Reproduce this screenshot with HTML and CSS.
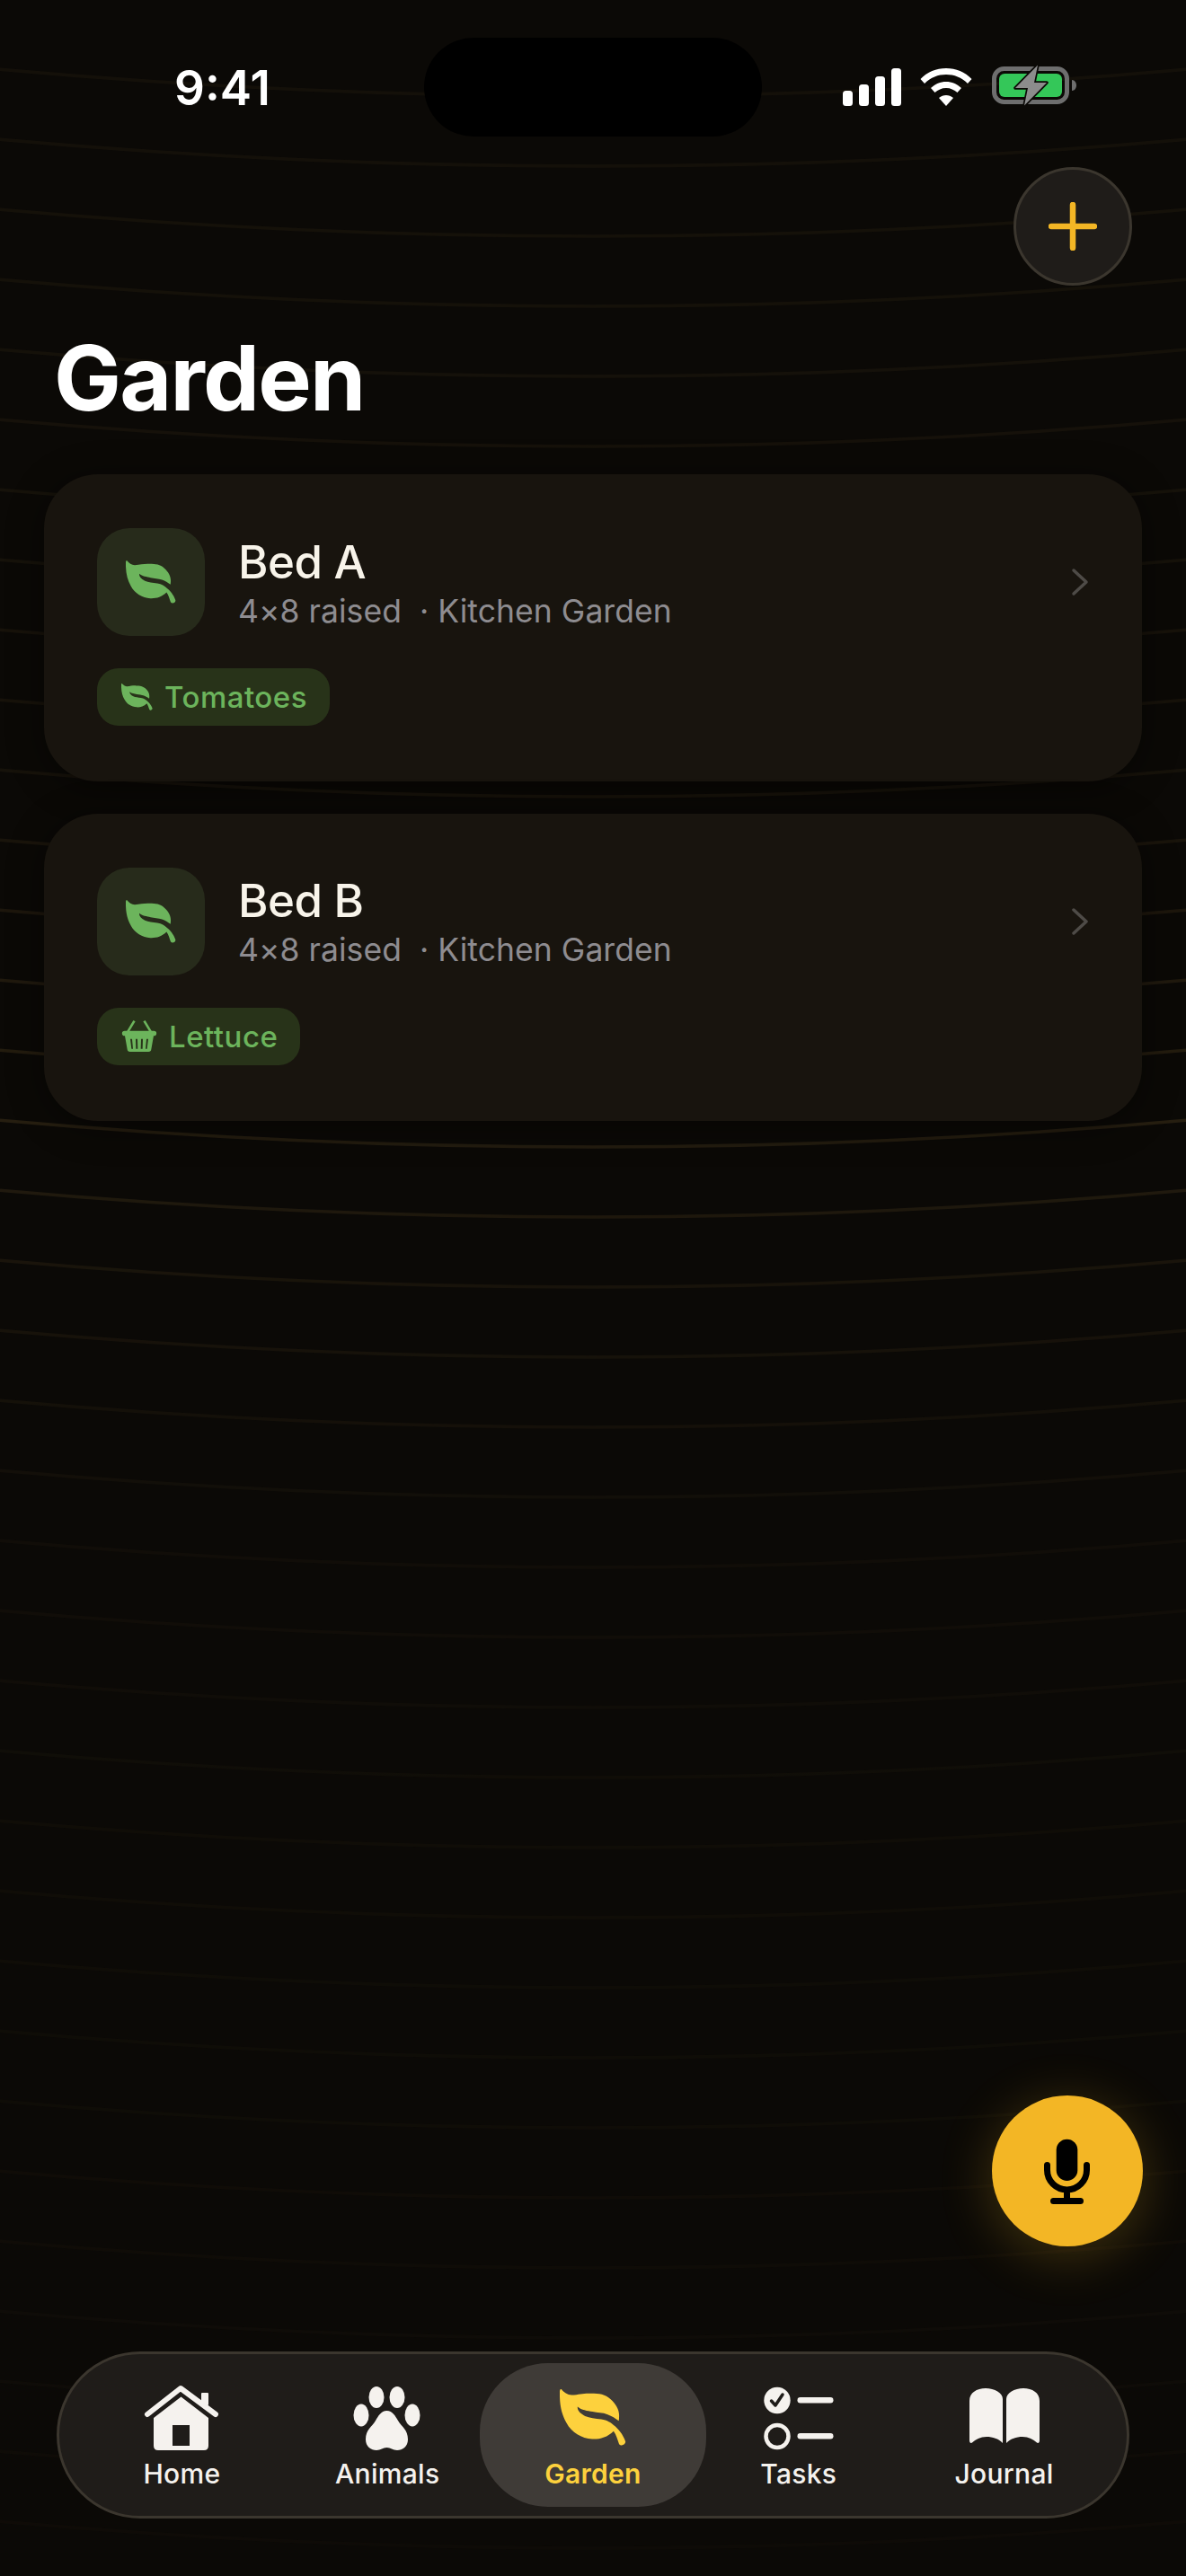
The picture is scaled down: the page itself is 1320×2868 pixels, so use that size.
FILE: index.html
```html
<!DOCTYPE html>
<html lang="en">
<head>
<meta charset="utf-8">
<title>Garden</title>
<link rel="stylesheet" href="styles.css">
</head>
<body>
<svg class="sprites" width="0" height="0" aria-hidden="true">
  <symbol id="leaf" viewBox="0 0 168 143">
    <path d="M4 0C10 8 20 14 30 15C50 14 60 10 79 11C100 11 115 13 128 25C142 37 150 52 150 65C150 72 150 76 149 80C140 73 132 68 121 64C108 59 95 60 83 57C70 54 55 53 45 44C44 52 50 60 64 68C75 73 90 74 105 76C120 78 130 85 136 91C148 100 160 115 166 132C167 141 155 145 150 139C146 128 143 115 136 106C120 122 100 127 82 126C55 124 30 110 17 85C5 65 -1 40 0 6C0 2 2 -1 4 0Z"/>
  </symbol>
  <symbol id="basket" viewBox="-3 0 120 105">
    <path d="M37 0l7 4L24 37h-9zM77 0l-7 4 20 33h9z"/>
    <path fill-rule="evenodd" d="M8 35H106A8.500 8.500 0 0 1 106 52H105L97 97Q96 105 88 105H26Q18 105 17 97L9 52H8A8.500 8.500 0 0 1 8 35ZM27 62L31 95H36L33 62ZM45 62L46 95H52L51 62ZM63 62L62 95H68L69 62ZM81 62L78 95H83L87 62Z"/>
  </symbol>
</svg>
<div class="phone">
  <svg class="backdrop" width="1320" height="2868" aria-hidden="true">
    <defs>
      <pattern id="arc" width="1320" height="78" patternUnits="userSpaceOnUse" y="75">
        <path d="M-2 2Q660 62 1322 2" class="arc-line"/>
      </pattern>
      <linearGradient id="fade" x1="0" x2="0" y1="0" y2="1">
        <stop offset="0" stop-color="#fff" stop-opacity=".36"/>
        <stop offset=".3" stop-color="#fff" stop-opacity=".46"/>
        <stop offset=".435" stop-color="#fff" stop-opacity="1"/>
        <stop offset=".5" stop-color="#fff" stop-opacity=".5"/>
        <stop offset=".6" stop-color="#fff" stop-opacity=".24"/>
        <stop offset="1" stop-color="#fff" stop-opacity=".14"/>
      </linearGradient>
      <mask id="fademask"><rect width="1320" height="2868" fill="url(#fade)"/></mask>
    </defs>
    <rect y="75" width="1320" height="2793" fill="url(#arc)" mask="url(#fademask)"/>
  </svg>

  <header class="status">
    <span class="clock">9:41</span>
    <div class="island"></div>
    <div class="status-icons">
      <svg class="signal" viewBox="0 0 66 42"><rect x="1" y="25" width="11" height="17" rx="3.500"/><rect x="19" y="18" width="11" height="24" rx="3.500"/><rect x="37" y="9" width="11" height="33" rx="3.500"/><rect x="55" y="0" width="11" height="42" rx="3.500"/></svg>
      <svg class="wifi" viewBox="0 0 58 42"><path d="M29 0C40 0 50 4 57.500 12L53 17C46 10 38 7 29 7C20 7 12 10 5 17L.5 12C8 4 18 0 29 0Z"/><path d="M29 15C35.500 15 41 17.500 46 22L41.500 27C38 24 34 22 29 22C24 22 20 24 16.500 27L12 22C17 17.500 22.500 15 29 15Z"/><path d="M29 30C32 30 34.500 31 37 33L29 42L21 33C23.500 31 26 30 29 30Z"/></svg>
      <svg class="battery" viewBox="0 0 94 46">
        <rect x="2.500" y="4.500" width="81" height="37" rx="11" class="batt-shell"/>
        <rect x="8" y="10" width="70" height="26" rx="6" class="batt-fill"/>
        <path d="M89 17C92 17 94 20 94 23C94 26 92 29 89 29Z" class="batt-tip"/>
        <path d="M51 0.500L26 26H40L36 45.500L61 20H47Z" class="batt-bolt"/>
      </svg>
    </div>
  </header>

  <div class="actions">
    <button class="add" type="button" aria-label="Add">
      <svg viewBox="0 0 54 54"><path d="M27 3V51M3 27H51"/></svg>
    </button>
  </div>

  <h1 class="title">Garden</h1>

  <main class="beds">
    <article class="bed">
      <div class="bed-head">
        <div class="bed-icon"><svg class="leaf-lg"><use href="#leaf"/></svg></div>
        <div class="bed-text">
          <h2 class="bed-name">Bed A</h2>
          <p class="bed-sub"><span>4×8 raised</span><span>· Kitchen Garden</span></p>
        </div>
        <svg class="chev" viewBox="0 0 20 32"><path d="M3 3L17 16L3 29"/></svg>
      </div>
      <div class="chip"><svg class="leaf-sm"><use href="#leaf"/></svg><span>Tomatoes</span></div>
    </article>
    <article class="bed">
      <div class="bed-head">
        <div class="bed-icon"><svg class="leaf-lg"><use href="#leaf"/></svg></div>
        <div class="bed-text">
          <h2 class="bed-name">Bed B</h2>
          <p class="bed-sub"><span>4×8 raised</span><span>· Kitchen Garden</span></p>
        </div>
        <svg class="chev" viewBox="0 0 20 32"><path d="M3 3L17 16L3 29"/></svg>
      </div>
      <div class="chip"><svg class="basket-sm"><use href="#basket"/></svg><span>Lettuce</span></div>
    </article>
  </main>

  <div class="fab-row">
    <button class="fab" type="button" aria-label="Record">
      <svg viewBox="0 0 56 76">
        <rect x="15.700" y="2.700" width="23.600" height="46.300" rx="11.800" class="mic-body"/>
        <path d="M5.500 31.500V37A22 22 0 0 0 49.500 37V31.500M27.500 59V71.500M12.500 71.500H42.500" class="mic-stand"/>
      </svg>
    </button>
  </div>

  <nav class="tabs">
    <a class="tab">
      <svg class="ico ico-home" viewBox="0 0 86 76">
        <path d="M5 33L42 4L81 33" class="ico-stroke"/>
        <rect x="65" y="9" width="8" height="14" rx="1"/>
        <path fill-rule="evenodd" d="M42.500 13.500L73 37V68Q73 73 68 73H17Q12 73 12 68V37ZM33 45V68H52V45Z"/>
      </svg>
      <span>Home</span>
    </a>
    <a class="tab">
      <svg class="ico ico-paw" viewBox="0 0 82 76">
        <ellipse cx="29" cy="14" rx="8.500" ry="12"/><ellipse cx="52" cy="14" rx="8.500" ry="12"/>
        <ellipse cx="12" cy="34" rx="8.500" ry="12.500"/><ellipse cx="69" cy="34" rx="8.500" ry="12.500"/>
        <path d="M40.500 29C47 29 50 35 53 40C57 47 64 50 64 61C64 69 58 73 52 73C47 73 45 70 40.500 70C36 70 34 73 29 73C23 73 17 69 17 61C17 50 24 47 28 40C31 35 34 29 40.500 29Z"/>
      </svg>
      <span>Animals</span>
    </a>
    <a class="tab tab-on">
      <svg class="ico ico-leaf"><use href="#leaf"/></svg>
      <span>Garden</span>
    </a>
    <a class="tab">
      <svg class="ico ico-tasks" viewBox="0 0 82 76">
        <circle cx="17" cy="17.500" r="14.700"/>
        <path d="M10.500 18L15 23L23 11" class="ico-check"/>
        <circle cx="17" cy="57.500" r="12.500" class="ico-ring"/>
        <rect x="39.500" y="14" width="40" height="6.500" rx="3.250"/>
        <rect x="39.500" y="54" width="40" height="6.500" rx="3.250"/>
      </svg>
      <span>Tasks</span>
    </a>
    <a class="tab">
      <svg class="ico ico-book" viewBox="0 0 82 76">
        <path d="M2 18C2 9 10 4 20 4C30 4 39 9 39 16V65C34 60 28 58 21 58C14 58 9 61 5 64.500C3.500 65.500 2 64.500 2 62Z"/>
        <path d="M80 18C80 9 72 4 62 4C52 4 43 9 43 16V65C48 60 54 58 61 58C68 58 73 61 77 64.500C78.500 65.500 80 64.500 80 62Z"/>
      </svg>
      <span>Journal</span>
    </a>
  </nav>
</div>
</body>
</html>
```

FILE: styles.css
```css
* { box-sizing: border-box; margin: 0; padding: 0; }

html, body { background: #0b0906; }

body { font-family: Inter, "Liberation Sans", sans-serif; }

.sprites { position: absolute; }

.phone {
  position: relative;
  width: 1320px;
  height: 2868px;
  display: flex;
  flex-direction: column;
  overflow: hidden;
  background: #0b0906;
}

.backdrop { position: absolute; left: 0; top: 0; }

.arc-line { fill: none; stroke: #261e10; stroke-width: 3.500; }

.status {
  position: relative;
  height: 186px;
  flex: none;
}

.clock {
  position: absolute;
  left: 194px;
  top: 70px;
  font-size: 53px;
  line-height: 56px;
  font-weight: 600;
  color: #fff;
}

.island {
  position: absolute;
  left: 472px;
  top: 42px;
  width: 376px;
  height: 110px;
  border-radius: 55px;
  background: #000;
}

.status-icons {
  position: absolute;
  left: 937px;
  top: 72px;
  display: flex;
  align-items: flex-start;
}

.signal { width: 66px; height: 42px; margin-top: 4px; fill: #fff; }
.wifi { width: 58px; height: 42px; margin: 4px 0 0 21px; fill: #fff; }
.battery { width: 94px; height: 46px; margin-left: 22px; }
.batt-shell { fill: none; stroke: #6e6e6e; stroke-width: 5; }
.batt-fill { fill: #34c759; }
.batt-tip { fill: #6e6e6e; }
.batt-bolt { fill: #8c8c8c; stroke: #0b0906; stroke-width: 3.500; stroke-linejoin: round; paint-order: stroke; }

.actions {
  position: relative;
  display: flex;
  justify-content: flex-end;
  padding-right: 60px;
  flex: none;
}

.add {
  width: 132px;
  height: 132px;
  border-radius: 50%;
  background: #1f1c19;
  border: 3px solid #3b362e;
  display: flex;
  align-items: center;
  justify-content: center;
}

.add svg { width: 54px; height: 54px; }
.add path { fill: none; stroke: #f3b625; stroke-width: 6.500; stroke-linecap: round; }

.title {
  position: relative;
  margin: 43px 0 0 60px;
  font-size: 100px;
  line-height: 120px;
  font-weight: 700;
  letter-spacing: -1.800px;
  color: #fff;
  flex: none;
}

.beds {
  position: relative;
  margin-top: 47px;
  padding: 0 48px;
  display: flex;
  flex-direction: column;
  gap: 36.330px;
  flex: none;
}

.bed {
  height: 341.670px;
  margin: 0 1px;
  padding: 60px 59px;
  border-radius: 60px;
  background: #18140e;
  box-shadow: 0 6px 40px rgba(0, 0, 0, .45);
}

.bed-head { display: flex; align-items: center; }

.bed-icon {
  width: 120px;
  height: 120px;
  border-radius: 36px;
  background: #272b1b;
  display: flex;
  align-items: center;
  justify-content: center;
  flex: none;
}

.leaf-lg { width: 56px; height: 48px; fill: #6cb45c; }

.bed-text { margin-left: 37px; padding-top: 3px; flex: 1; }

.bed-name {
  font-size: 51px;
  line-height: 60px;
  font-weight: 500;
  letter-spacing: -.5px;
  color: #f8f4ea;
}

.bed-sub {
  display: flex;
  gap: 20px;
  margin-top: 2px;
  font-size: 35.500px;
  line-height: 46px;
  letter-spacing: .05px;
  color: #8e8c90;
}

.chev { width: 20px; height: 32px; flex: none; }
.chev path { fill: none; stroke: #4e4b47; stroke-width: 3.500; stroke-linecap: round; stroke-linejoin: round; }

.chip {
  display: inline-flex;
  align-items: center;
  height: 64px;
  margin-top: 36px;
  padding: 0 25px 0 27px;
  gap: 13px;
  border-radius: 24px;
  background: #283319;
  font-size: 33px;
  font-weight: 550;
  letter-spacing: .5px;
  color: #6cb45c;
}

.leaf-sm { width: 35px; height: 30px; fill: #6cb45c; }
.basket-sm { width: 40px; height: 35px; fill: #6cb45c; }

.fab-row {
  position: relative;
  margin-top: auto;
  display: flex;
  justify-content: flex-end;
  padding-right: 48px;
  flex: none;
}

.fab {
  width: 168px;
  height: 168px;
  border: 0;
  border-radius: 50%;
  background: #f3b625;
  box-shadow: 0 10px 60px rgba(243, 182, 37, .24);
  display: flex;
  align-items: center;
  justify-content: center;
}

.fab svg { width: 56px; height: 76px; }
.mic-body { fill: #000; }
.mic-stand { fill: none; stroke: #000; stroke-width: 7; stroke-linecap: round; }

.tabs {
  position: relative;
  flex: none;
  width: 1194px;
  height: 186px;
  margin: 117px 0 64px 63px;
  padding: 10px 22px;
  display: grid;
  grid-template-columns: repeat(5, 1fr);
  background: #1f1c19;
  border: 3px solid #3b362e;
  border-radius: 93px;
}

.tab {
  display: flex;
  flex-direction: column;
  align-items: center;
  justify-content: flex-end;
  padding-bottom: 19px;
  border-radius: 76px;
  font-size: 30px;
  line-height: 36px;
  font-weight: 500;
  letter-spacing: .3px;
  color: #f5f2ee;
  fill: #f5f2ee;
}

.tab-on {
  margin: 0 -12px;
  background: #3f3b37;
  color: #fdd13d;
  fill: #fdd13d;
  font-weight: 600;
}

.ico { width: 82px; height: 76px; margin-bottom: 5px; }
.ico-home { width: 86px; }
.ico-leaf { width: 74px; height: 63px; margin-bottom: 13px; }
.ico-stroke { fill: none; stroke: #f5f2ee; stroke-width: 6; stroke-linecap: round; stroke-linejoin: round; }
.ico-check { fill: none; stroke: #1f1c19; stroke-width: 3.500; stroke-linecap: round; stroke-linejoin: round; }
.ico-ring { fill: none; stroke: #f5f2ee; stroke-width: 4.500; }
```
